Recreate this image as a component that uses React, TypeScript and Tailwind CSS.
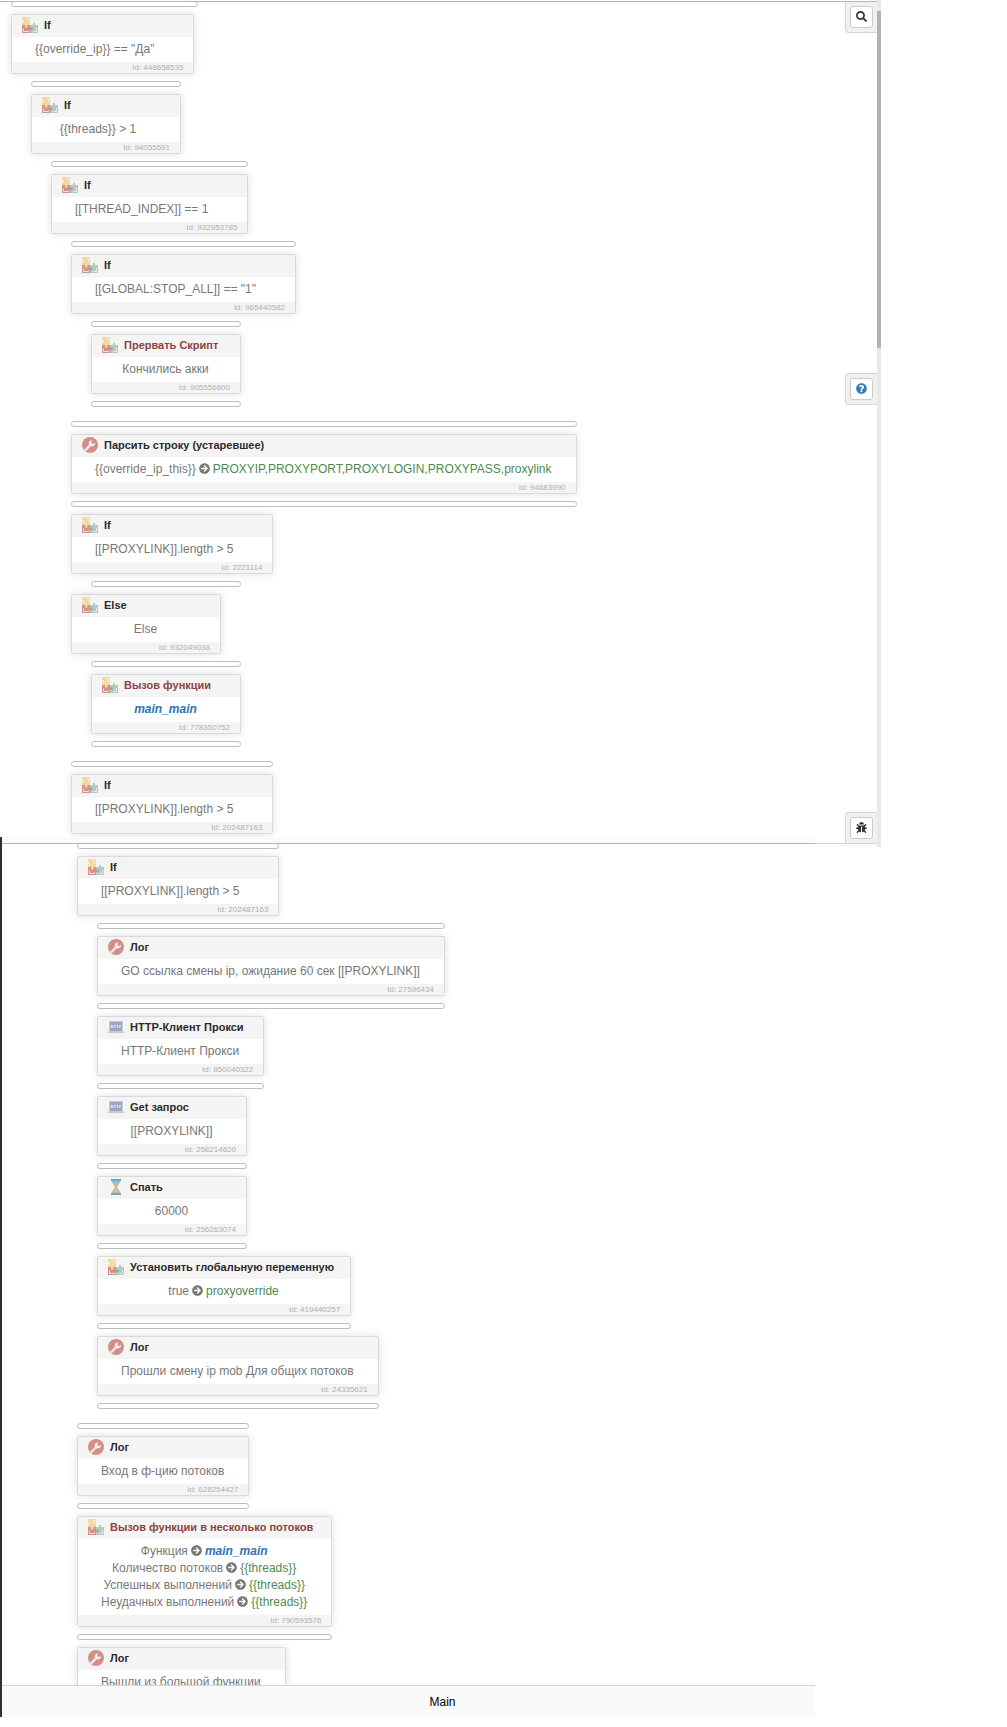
import type { ReactNode } from "react";
import { FaArrowCircleRight, FaBug, FaQuestionCircle, FaSearch } from "react-icons/fa";

function PuzzleIcon() {
  return (
    <svg viewBox="0 0 16 16" className="size-4 shrink-0" aria-hidden="true">
      <path d="M0 8H8V16H0Z" fill="#d1928a" />
      <path d="M8 8H11V6.500A1.200 1.200 0 0 1 13 6.500V8H16V16H8Z" fill="#adcdc0" />
      <path d="M0 0H8V8H5.500V9.500A1.200 1.200 0 0 1 3 9.500V8H0V5.500H1.500V3.500H0Z" fill="#f3d9a0" />
      <path d="M8 10.500H10A1.300 1.300 0 0 1 10 13H8Z" fill="#d1928a" />
      <path d="M4.500 1.500H6.500V5M1.500 11.500V14.500H6.500V13.500M14.500 11V14.500H11.500" fill="none" stroke="#faf3ee" strokeWidth="0.8" />
    </svg>
  );
}

function WrenchIcon() {
  return (
    <svg viewBox="0 0 16 16" className="size-4 shrink-0" aria-hidden="true">
      <circle cx="8" cy="8" r="8" fill="#d48e86" />
      <path d="M3.6 14.6L2 13L7 7.8C6.2 5.6 7.6 3.2 10.6 3.2L9.2 5L9.6 6.6L11.2 7L13 5.4C13.4 8.4 11 9.9 8.7 9.3Z" fill="#f4f0ef" />
      <path d="M2 13L7 7.8L7.8 8.6L2.8 13.9Z" fill="#dfe0e2" />
    </svg>
  );
}

function HttpIcon() {
  return (
    <svg viewBox="0 0 16 16" className="size-4 shrink-0" aria-hidden="true">
      <rect x="1" y="2" width="14" height="11" rx="0.8" fill="#c9cdd6" />
      <rect x="2" y="3" width="12" height="9" fill="#9aa5cb" />
      <rect x="0" y="12.6" width="16" height="1.4" rx="0.5" fill="#c3cccd" />
      <path d="M3.5 6V9M5 6V9M3.5 7.5H5M6 6.3H8M7 6.3V9M8.6 6.3H10.4M9.5 6.3V9M11.4 9V6.3H12.6V7.7H11.4" fill="none" stroke="#e8ecf8" strokeWidth="0.8" />
    </svg>
  );
}

function HourglassIcon() {
  return (
    <svg viewBox="0 0 16 16" className="size-4 shrink-0" aria-hidden="true">
      <path d="M4 2H12C12 5 9.5 6.6 9 8C9.5 9.4 12 11 12 14H4C4 11 6.5 9.4 7 8C6.5 6.6 4 5 4 2Z" fill="#8fc3d2" />
      <path d="M4.8 4H11.2L8.5 7.6H7.5Z" fill="#e2b36d" />
      <path d="M8 8L11.6 14H4.4Z" fill="#e8c07c" />
      <rect x="3" y="0" width="10" height="2.2" fill="#6ea9bd" />
      <rect x="3" y="13.8" width="10" height="2.2" fill="#6ea9bd" />
    </svg>
  );
}

const icons = {
  puzzle: PuzzleIcon,
  wrench: WrenchIcon,
  http: HttpIcon,
  hourglass: HourglassIcon,
};

const indents = ["ml-0", "ml-5", "ml-10", "ml-15", "ml-20"];

type BlockProps = {
  id: string;
  title: string;
  icon: keyof typeof icons;
  level?: number;
  before?: boolean;
  after?: boolean;
  spaced?: boolean;
  condition?: boolean;
  danger?: boolean;
  children: ReactNode;
};

function Bar({ className = "" }: { className?: string }) {
  return <div className={`h-1.5 shrink-0 rounded-[3px] border border-[#bdbdbd] bg-white ${className}`} />;
}

function Block({ id, title, icon, level = 0, before, after, spaced, condition, danger, children }: BlockProps) {
  const Icon = icons[icon];
  return (
    <div className={`flex w-fit min-w-[150px] shrink-0 flex-col gap-[7px] ${indents[level]} ${spaced ? "mt-[7px]" : ""}`}>
      {before && <Bar />}
      <article className="rounded-[2px] border border-[#dadada] bg-white shadow-[0_0_8px_rgba(0,0,0,0.13)]">
        <header className="flex h-[22px] items-center gap-1.5 bg-[#f4f4f4] pr-4 pb-0.5 pl-2.5">
          <Icon />
          <h3 className={`text-[11px] leading-4 font-bold whitespace-nowrap ${danger ? "text-[#8c4343]" : "text-[#2b2b2b]"}`}>{title}</h3>
        </header>
        <div className={`py-1 pl-[23px] text-center text-xs leading-[17px] whitespace-nowrap text-[#777] ${condition ? "pr-[39px]" : "pr-6"}`}>
          {children}
        </div>
        <footer className="h-[11px] bg-[#f4f4f4] pr-2.5 text-right text-[8px] leading-[11px] text-[#b0b0b0]">Id: {id}</footer>
      </article>
      {after && <Bar />}
    </div>
  );
}

function Arrow() {
  return <FaArrowCircleRight className="mx-[3px] inline size-[11px] align-[-1px]" />;
}

function Var({ children }: { children: ReactNode }) {
  return <span className="text-[#4e8a50]">{children}</span>;
}

function Func() {
  return <a href="#main_main" className="font-bold text-[#2d74b5] italic">main_main</a>;
}

function ToolButton({ label, className, children }: { label: string; className: string; children: ReactNode }) {
  return (
    <div className={`absolute right-0 border border-r-0 border-[#d5d5d5] bg-[#f0f0f0] p-1 ${className}`}>
      <button type="button" aria-label={label} className="flex h-[22px] w-[23px] items-center justify-center rounded-[3px] border border-[#ccc] bg-white pb-px">
        {children}
      </button>
    </div>
  );
}

export default function App() {
  return (
    <div className="min-h-screen bg-white font-['Liberation_Sans',Arial,sans-serif]">
      <section className="mr-[126px] flex h-[847px]">
        <div className="mt-px flex min-w-0 flex-1 flex-col bg-[#fafafa]">
          <div className="relative h-[843px] overflow-hidden border-t border-b border-t-[#b5b5b5] border-b-[#d5d5d5] bg-white">
            <div className="-mt-px flex flex-col gap-[7px] pl-[11px]">
              <Bar className="w-[187px]" />
              <Block id="448658535" title="If" icon="puzzle" condition>{'{{override_ip}} == "Да"'}</Block>
              <Block id="94055591" title="If" icon="puzzle" level={1} before condition>{"{{threads}} > 1"}</Block>
              <Block id="932953785" title="If" icon="puzzle" level={2} before condition>[[THREAD_INDEX]] == 1</Block>
              <Block id="965440582" title="If" icon="puzzle" level={3} before condition>[[GLOBAL:STOP_ALL]] == "1"</Block>
              <Block id="905556600" title="Прервать Скрипт" icon="puzzle" level={4} before after danger>Кончились акки</Block>
              <Block id="94883990" title="Парсить строку (устаревшее)" icon="wrench" level={3} before after spaced>
                {"{{override_ip_this}}"}<Arrow /><Var>PROXYIP,PROXYPORT,PROXYLOGIN,PROXYPASS,proxylink</Var>
              </Block>
              <Block id="2221114" title="If" icon="puzzle" level={3} condition>{"[[PROXYLINK]].length > 5"}</Block>
              <Bar className="ml-20 w-[150px]" />
              <Block id="932049038" title="Else" icon="puzzle" level={3}>Else</Block>
              <Block id="778350752" title="Вызов функции" icon="puzzle" level={4} before after danger><Func /></Block>
              <Block id="202487163" title="If" icon="puzzle" level={3} before spaced condition>{"[[PROXYLINK]].length > 5"}</Block>
            </div>
            <ToolButton label="Поиск" className="top-0 rounded-bl-[4px] border-t-0"><FaSearch className="size-[11px] text-[#333]" /></ToolButton>
            <ToolButton label="Справка" className="top-[371px] rounded-l-[4px]"><FaQuestionCircle className="size-[11px] text-[#337ab7]" /></ToolButton>
            <ToolButton label="Отладка" className="bottom-0 rounded-tl-[4px] border-b-0"><FaBug className="size-[11px] text-[#333]" /></ToolButton>
          </div>
        </div>
        <div className="w-1 bg-[#e8e8e8] pt-[11px]">
          <div className="h-[337px] bg-[#b3b3b3]" />
        </div>
      </section>

      <section className="relative -mt-2.5 mr-[192px] border-l-2 border-[#2f3033] bg-[#fafafa] pt-1.5">
        <div className="h-[842px] overflow-hidden border-t border-[#b5b5b5] bg-white">
          <div className="-mt-px flex flex-col gap-[7px] pl-[75px]">
            <Block id="202487163" title="If" icon="puzzle" before condition>{"[[PROXYLINK]].length > 5"}</Block>
            <Block id="27596434" title="Лог" icon="wrench" level={1} before after>GO ссылка смены ip, ожидание 60 сек [[PROXYLINK]]</Block>
            <Block id="850040322" title="HTTP-Клиент Прокси" icon="http" level={1} after>HTTP-Клиент Прокси</Block>
            <Block id="258214620" title="Get запрос" icon="http" level={1} after>[[PROXYLINK]]</Block>
            <Block id="256263074" title="Спать" icon="hourglass" level={1} after>60000</Block>
            <Block id="419440257" title="Установить глобальную переменную" icon="puzzle" level={1} after>true<Arrow /><Var>proxyoverride</Var></Block>
            <Block id="24335621" title="Лог" icon="wrench" level={1} after>Прошли смену ip mob Для общих потоков</Block>
            <Block id="628254427" title="Лог" icon="wrench" before after spaced>Вход в ф-цию потоков</Block>
            <Block id="790593576" title="Вызов функции в несколько потоков" icon="puzzle" after danger>
              <p>Функция<Arrow /><Func /></p>
              <p>Количество потоков<Arrow /><Var>{"{{threads}}"}</Var></p>
              <p>Успешных выполнений<Arrow /><Var>{"{{threads}}"}</Var></p>
              <p>Неудачных выполнений<Arrow /><Var>{"{{threads}}"}</Var></p>
            </Block>
            <Block id="" title="Лог" icon="wrench">Вышли из большой функции</Block>
          </div>
        </div>
        <footer className="flex h-8 items-center justify-center border-t border-[#d5d5d5] pl-[68px] text-xs text-black">
          Main
        </footer>
      </section>
    </div>
  );
}
